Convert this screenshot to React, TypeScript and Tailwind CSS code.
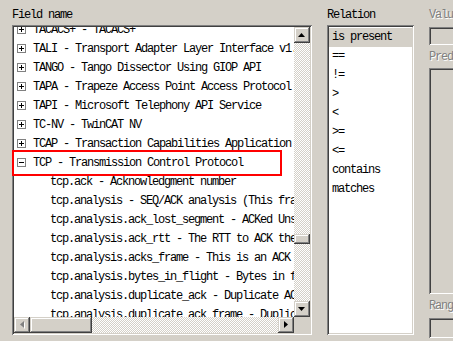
import React from "react";

type TreeRow = { kind: "plus" | "minus" | "child"; text: string };

const TREE: TreeRow[] = [
  { kind: "plus", text: "TACACS+ - TACACS+" },
  { kind: "plus", text: "TALI - Transport Adapter Layer Interface v1.0" },
  { kind: "plus", text: "TANGO - Tango Dissector Using GIOP API" },
  { kind: "plus", text: "TAPA - Trapeze Access Point Access Protocol" },
  { kind: "plus", text: "TAPI - Microsoft Telephony API Service" },
  { kind: "plus", text: "TC-NV - TwinCAT NV" },
  { kind: "plus", text: "TCAP - Transaction Capabilities Application Part" },
  { kind: "minus", text: "TCP - Transmission Control Protocol" },
  { kind: "child", text: "tcp.ack - Acknowledgment number" },
  { kind: "child", text: "tcp.analysis - SEQ/ACK analysis (This frame has some of the TCP analysis shown)" },
  { kind: "child", text: "tcp.analysis.ack_lost_segment - ACKed Unseen segment" },
  { kind: "child", text: "tcp.analysis.ack_rtt - The RTT to ACK the segment was" },
  { kind: "child", text: "tcp.analysis.acks_frame - This is an ACK to the segment in frame" },
  { kind: "child", text: "tcp.analysis.bytes_in_flight - Bytes in flight" },
  { kind: "child", text: "tcp.analysis.duplicate_ack - Duplicate ACK" },
  { kind: "child", text: "tcp.analysis.duplicate_ack_frame - Duplicate to the ACK in frame" },
];

const RELATIONS = ["is present", "==", "!=", ">", "<", ">=", "<=", "contains", "matches"];

// win2k bevels
const SUNKEN =
  "shadow-[inset_1px_1px_0_#808080,inset_-1px_-1px_0_#ffffff,inset_2px_2px_0_#404040,inset_-2px_-2px_0_#d4d0c8]";
const RAISED =
  "shadow-[inset_-1px_-1px_0_#404040,inset_1px_1px_0_#d4d0c8,inset_-2px_-2px_0_#808080,inset_2px_2px_0_#ffffff]";
const CHECKER =
  "[background-image:repeating-conic-gradient(#ffffff_0_25%,#d4d0c8_0_50%)] [background-size:2px_2px]";
const DISABLED_TEXT = "text-[#808080] [text-shadow:1px_1px_0_#ffffff]";

function Arrow({ dir, disabled }: { dir: "up" | "down" | "left" | "right"; disabled?: boolean }) {
  const pts: Record<string, string> = {
    up: "3.5,0 7,4 0,4",
    down: "0,0 7,0 3.5,4",
    left: "4,0 4,7 0,3.5",
    right: "0,0 4,3.5 0,7",
  };
  const vertical = dir === "up" || dir === "down";
  const w = vertical ? 7 : 4;
  const h = vertical ? 4 : 7;
  return (
    <svg width={w + 1} height={h + 1} viewBox={`0 0 ${w + 1} ${h + 1}`}>
      {disabled && <polygon points={pts[dir]} fill="#ffffff" transform="translate(1 1)" />}
      <polygon points={pts[dir]} fill={disabled ? "#808080" : "#000000"} />
    </svg>
  );
}

function ScrollButton({ dir, disabled }: { dir: "up" | "down" | "left" | "right"; disabled?: boolean }) {
  return (
    <div className={`w-[16px] h-[16px] shrink-0 bg-[#d4d0c8] flex items-center justify-center ${RAISED}`}>
      <Arrow dir={dir} disabled={disabled} />
    </div>
  );
}

function ExpandBox({ open }: { open: boolean }) {
  return (
    <div className="w-[9px] h-[9px] shrink-0 border border-[#808080] bg-white relative">
      <div className="absolute left-[1px] top-[3px] w-[5px] h-[1px] bg-black" />
      {!open && <div className="absolute left-[3px] top-[1px] w-[1px] h-[5px] bg-black" />}
    </div>
  );
}

function Label({ children, disabled }: { children: React.ReactNode; disabled?: boolean }) {
  return (
    <div className={`h-[19px] leading-[19px] whitespace-nowrap ${disabled ? DISABLED_TEXT : "text-black"}`}>
      {children}
    </div>
  );
}

export default function App() {
  return (
    <div
      className="w-[453px] h-[341px] bg-[#d4d0c8] relative overflow-hidden flex gap-[15px] pl-[12px] pt-[6px] text-[12px] tracking-[-1.2px]"
      style={{ fontFamily: '"Liberation Mono", "Noto Sans CJK SC", monospace' }}
    >
      {/* Field name */}
      <div className="w-[300px] shrink-0 flex flex-col">
        <Label>Field name</Label>
        <div className={`h-[310px] p-[2px] bg-[#d4d0c8] flex flex-col ${SUNKEN}`}>
          <div className="flex flex-1 min-h-0">
            <div className="flex-1 bg-white overflow-hidden">
              <div className="mt-[-7px]">
                {TREE.map((r, i) => (
                  <div
                    key={i}
                    className={`h-[19px] flex items-center whitespace-nowrap ${r.kind === "child" ? "pl-[36px]" : "pl-[3px]"}`}
                  >
                    {r.kind !== "child" && <ExpandBox open={r.kind === "minus"} />}
                    <span className={r.kind !== "child" ? "ml-[7px]" : ""}>{r.text}</span>
                  </div>
                ))}
              </div>
            </div>
            <div className={`w-[16px] flex flex-col ${CHECKER}`}>
              <ScrollButton dir="up" />
              <div className="h-[191px]" />
              <div className={`h-[10px] bg-[#d4d0c8] ${RAISED}`} />
              <div className="flex-1" />
              <ScrollButton dir="down" />
            </div>
          </div>
          <div className="h-[16px] flex">
            <div className={`flex-1 flex ${CHECKER}`}>
              <ScrollButton dir="left" disabled />
              <div className={`w-[62px] bg-[#d4d0c8] ${RAISED}`} />
              <div className="flex-1" />
              <ScrollButton dir="right" />
            </div>
            <div className="w-[16px] bg-[#d4d0c8]" />
          </div>
        </div>
      </div>

      {/* Relation */}
      <div className="w-[87px] shrink-0 flex flex-col">
        <Label>Relation</Label>
        <div className={`h-[310px] p-[2px] bg-[#d4d0c8] ${SUNKEN}`}>
          <div className="h-full bg-white pt-[1px]">
            {RELATIONS.map((r, i) => (
              <div
                key={r}
                className={`h-[19px] leading-[19px] pl-[3px] whitespace-nowrap ${i === 0 ? "bg-[#d4d0c8]" : ""}`}
              >
                {r}
              </div>
            ))}
          </div>
        </div>
      </div>

      {/* Value (disabled) */}
      <div className="w-[150px] shrink-0 flex flex-col">
        <Label disabled>Value</Label>
        <div className={`h-[18px] mt-[2px] bg-[#d4d0c8] ${SUNKEN}`} />
        <div className="mt-[3px]">
          <Label disabled>Predefined values</Label>
        </div>
        <div className={`h-[226px] mt-[1px] bg-[#d4d0c8] ${SUNKEN}`} />
        <div className="mt-[3px]">
          <Label disabled>Range</Label>
        </div>
        <div className={`h-[20px] mt-[2px] bg-[#d4d0c8] ${SUNKEN}`} />
      </div>

      {/* highlight around TCP row */}
      <div className="absolute left-[12px] top-[150px] w-[270px] h-[26px] border-2 border-[#ff0000]" />
    </div>
  );
}
